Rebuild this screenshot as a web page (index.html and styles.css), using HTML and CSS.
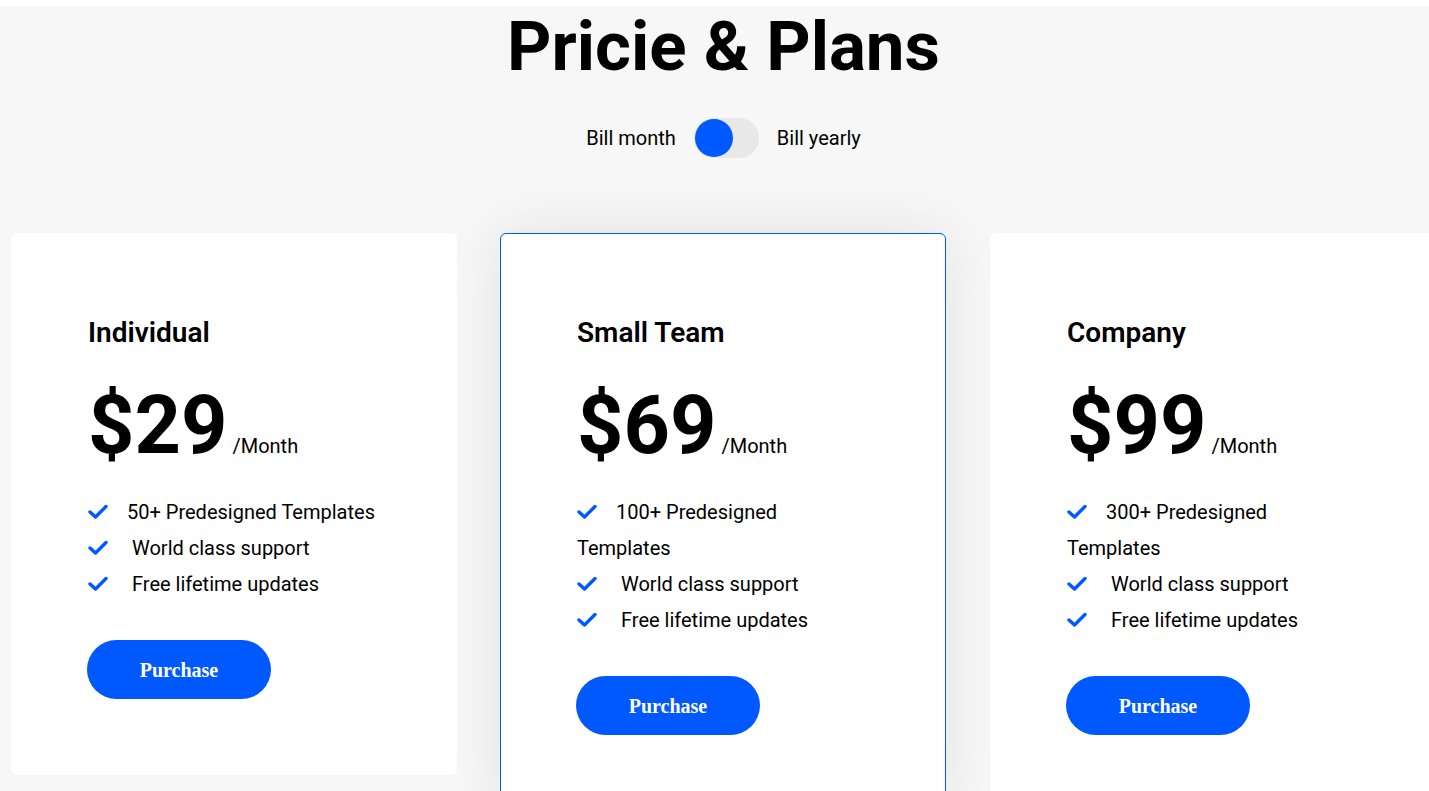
FILE: index.html
```html
<!DOCTYPE html>
<html lang="en">
<head>
<meta charset="utf-8">
<title>Pricie &amp; Plans</title>
<link rel="stylesheet" href="styles.css">
</head>
<body>
<section class="pricing">
  <header class="head">
    <h1 class="title">Pricie &amp; Plans</h1>
    <div class="billing">
      <span class="bill-label">Bill month</span>
      <span class="switch"><span class="knob"></span></span>
      <span class="bill-label">Bill yearly</span>
    </div>
  </header>
  <div class="cards">
    <div class="card">
      <h2 class="plan">Individual</h2>
      <div class="price"><span class="amount">$29</span><span class="per">/Month</span></div>
      <ul class="features">
        <li><svg class="check first" viewBox="0 0 20 16"><polyline points="2,8 7.5,13 18,2.5"/></svg>50+ Predesigned Templates</li>
        <li><svg class="check" viewBox="0 0 20 16"><polyline points="2,8 7.5,13 18,2.5"/></svg>World class support</li>
        <li><svg class="check" viewBox="0 0 20 16"><polyline points="2,8 7.5,13 18,2.5"/></svg>Free lifetime updates</li>
      </ul>
      <button class="buy">Purchase</button>
    </div>
    <div class="card featured">
      <h2 class="plan">Small Team</h2>
      <div class="price"><span class="amount">$69</span><span class="per">/Month</span></div>
      <ul class="features">
        <li><svg class="check first" viewBox="0 0 20 16"><polyline points="2,8 7.5,13 18,2.5"/></svg>100+ Predesigned Templates</li>
        <li><svg class="check" viewBox="0 0 20 16"><polyline points="2,8 7.5,13 18,2.5"/></svg>World class support</li>
        <li><svg class="check" viewBox="0 0 20 16"><polyline points="2,8 7.5,13 18,2.5"/></svg>Free lifetime updates</li>
      </ul>
      <button class="buy">Purchase</button>
    </div>
    <div class="card">
      <h2 class="plan">Company</h2>
      <div class="price"><span class="amount">$99</span><span class="per">/Month</span></div>
      <ul class="features">
        <li><svg class="check first" viewBox="0 0 20 16"><polyline points="2,8 7.5,13 18,2.5"/></svg>300+ Predesigned Templates</li>
        <li><svg class="check" viewBox="0 0 20 16"><polyline points="2,8 7.5,13 18,2.5"/></svg>World class support</li>
        <li><svg class="check" viewBox="0 0 20 16"><polyline points="2,8 7.5,13 18,2.5"/></svg>Free lifetime updates</li>
      </ul>
      <button class="buy">Purchase</button>
    </div>
  </div>
</section>
</body>
</html>
```
FILE: styles.css
```css
html, body {
  margin: 0;
  padding: 0;
  background: #ffffff;
  overflow-x: hidden;
}

body {
  font-family: Roboto, "Liberation Sans", sans-serif;
  color: #000;
}

.pricing {
  margin-top: 6px;
  background: #f7f7f7;
  min-height: 900px;
  padding: 0 0 40px 11px;
}

.head {
  padding-left: 7px;
}

.title {
  margin: 0;
  text-align: center;
  font-size: 69px;
  font-weight: 700;
  line-height: 82px;
}

.billing {
  display: flex;
  justify-content: center;
  align-items: center;
  gap: 18px;
  margin-top: 30px;
}

.bill-label {
  font-size: 20px;
}

.switch {
  width: 65px;
  height: 40px;
  border-radius: 20px;
  background: #e8e8e8;
  display: flex;
  align-items: center;
  padding-left: 1px;
  box-sizing: border-box;
}

.knob {
  width: 38px;
  height: 38px;
  border-radius: 50%;
  background: #0058ff;
}

.cards {
  display: flex;
  align-items: flex-start;
  gap: 43px;
  margin-top: 75px;
  width: 1500px;
}

.card {
  flex: 0 0 446px;
  box-sizing: border-box;
  background: #fff;
  border-radius: 6px;
  padding: 82px 77px 76px 77px;
}

.card.featured {
  border: 1px solid #0058ff;
  padding: 81px 76px 75px 76px;
  box-shadow: 0 0 60px rgba(0, 0, 0, 0.09);
}

.card:last-child {
  margin-left: 1px;
}

.plan {
  margin: 0;
  font-size: 28px;
  font-weight: 600;
  line-height: 36px;
}

.price {
  display: flex;
  align-items: baseline;
  margin-top: 27px;
}

.amount {
  font-size: 81px;
  font-weight: 700;
  line-height: 96px;
}

.per {
  font-size: 20px;
  margin-left: 5px;
}

.features {
  list-style: none;
  margin: 20px 0 0;
  padding: 0;
  font-size: 20px;
  line-height: 36px;
}

.check {
  width: 20px;
  height: 16px;
  margin-right: 24px;
  vertical-align: -1px;
}

.check.first {
  margin-right: 19px;
}

.check polyline {
  fill: none;
  stroke: #0058ff;
  stroke-width: 3.4;
  stroke-linecap: round;
  stroke-linejoin: round;
}

.buy {
  display: block;
  margin-top: 38px;
  margin-left: -1px;
  width: 184px;
  height: 59px;
  padding-top: 2px;
  border: none;
  border-radius: 30px;
  background: #0058ff;
  color: #fff;
  font-family: "Liberation Serif", "Times New Roman", serif;
  font-size: 20px;
  font-weight: 700;
}
```
